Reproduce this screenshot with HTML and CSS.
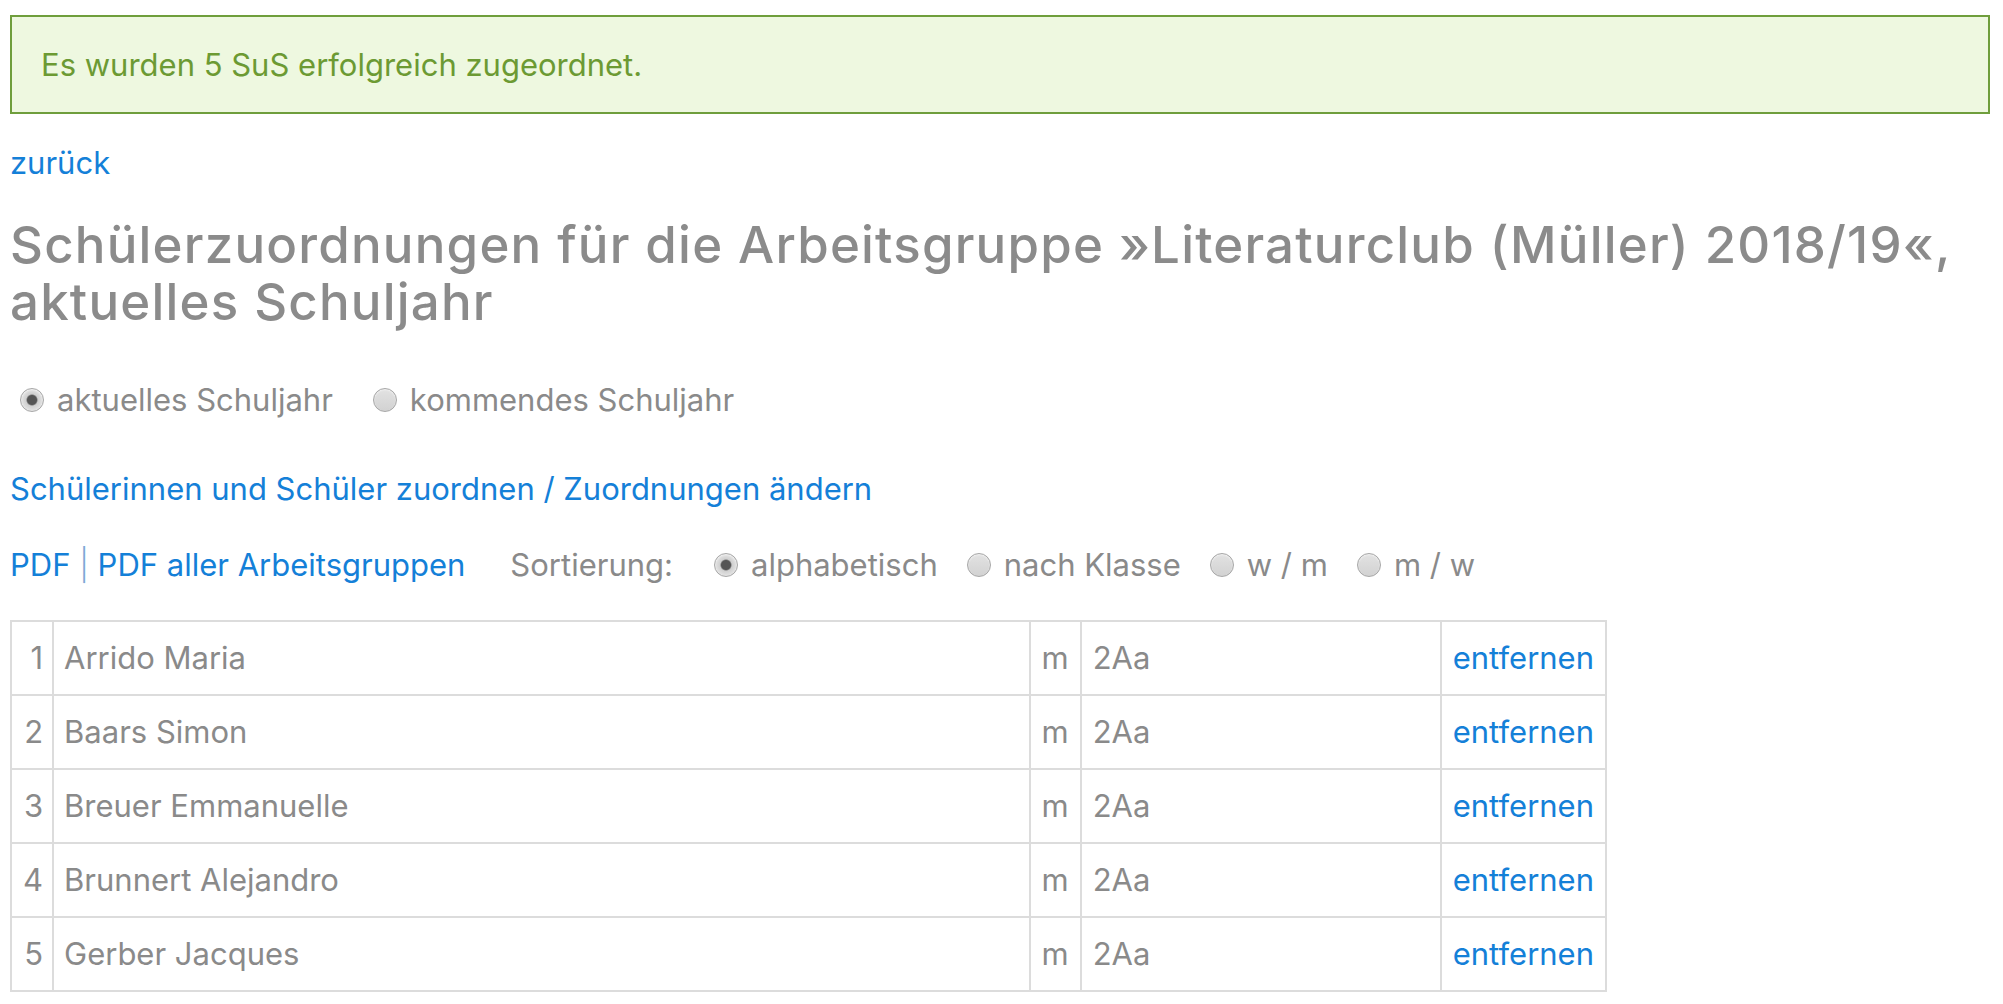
FILE: index.html
```html
<!DOCTYPE html>
<html lang="de">
<head>
  <meta charset="UTF-8"/>
  <meta name="viewport" content="width=device-width,initial-scale=1"/>
  <title>Schülerzuordnungen</title>
  <link rel="stylesheet" href="styles.css">
</head>
<body>

  <div class="notice">Es wurden 5 SuS erfolgreich zugeordnet.</div>

  <p class="back"><a href="#">zurück</a></p>

  <h1>Schülerzuordnungen für die Arbeitsgruppe »Literaturclub (Müller) 2018/19«, aktuelles Schuljahr</h1>

  <!-- Schuljahr -->
  <form class="choices year">
    <label><input type="radio" name="year" checked> aktuelles Schuljahr</label>
    <label><input type="radio" name="year"> kommendes Schuljahr</label>
  </form>

  <p class="assign"><a href="#">Schülerinnen und Schüler zuordnen / Zuordnungen ändern</a></p>

  <!-- PDF + Sortierung -->
  <form class="choices sort">
    <span class="pdf"><a href="#">PDF</a> <span class="sep">|</span> <a href="#">PDF aller Arbeitsgruppen</a></span>
    <span class="sort-label">Sortierung:</span>
    <label><input type="radio" name="sort" checked> alphabetisch</label>
    <label><input type="radio" name="sort"> nach Klasse</label>
    <label><input type="radio" name="sort"> w / m</label>
    <label><input type="radio" name="sort"> m / w</label>
  </form>

  <table class="members">
    <tr><td class="num">1</td><td class="name">Arrido Maria</td><td class="sex">m</td><td class="class">2Aa</td><td class="action"><a href="#">entfernen</a></td></tr>
    <tr><td class="num">2</td><td class="name">Baars Simon</td><td class="sex">m</td><td class="class">2Aa</td><td class="action"><a href="#">entfernen</a></td></tr>
    <tr><td class="num">3</td><td class="name">Breuer Emmanuelle</td><td class="sex">m</td><td class="class">2Aa</td><td class="action"><a href="#">entfernen</a></td></tr>
    <tr><td class="num">4</td><td class="name">Brunnert Alejandro</td><td class="sex">m</td><td class="class">2Aa</td><td class="action"><a href="#">entfernen</a></td></tr>
    <tr><td class="num">5</td><td class="name">Gerber Jacques</td><td class="sex">m</td><td class="class">2Aa</td><td class="action"><a href="#">entfernen</a></td></tr>
  </table>

</body>
</html>
```

FILE: styles.css
```css
body {
  margin: 15px 13px 20px 10px;
  background: #fff; color: #8a8a8a;
  font-family: Inter, "Noto Sans", sans-serif;
  font-size: 31px; line-height: 40px;
}
a { color: #1480d8; text-decoration: none; }
p { margin: 0; }

.notice {
  display: flex; align-items: center;
  height: 95px; padding: 0 23px 0 29px;
  border: 2px solid #6f9e3c; background: #eef8e0; color: #6c9a33;
}

.back { margin-top: 29px; }

h1 {
  margin: 33px 0 0; font-size: 51px; line-height: 57px;
  font-weight: 500; color: #8b8b8b; letter-spacing: 1.2px;
}

.choices { display: flex; align-items: center; margin: 0; }
.choices label { display: flex; align-items: center; }
.year { margin-top: 50px; padding-left: 10px; gap: 40px; }
.assign { margin-top: 49px; }
.sort { margin-top: 36px; gap: 29px; }
.sort .pdf { margin-right: 16px; }
.sort .sep { color: #7fa9d6; font-weight: 300; }
.sort .sort-label { margin-right: 12px; }

input[type=radio] {
  -webkit-appearance: none; appearance: none;
  width: 24px; height: 24px; margin: 0 13px 0 0;
  border: 1px solid #a7a7a7; border-radius: 50%;
  background: linear-gradient(#e2e2e2, #d2d2d2);
  box-shadow: inset 0 1px 2px rgba(255,255,255,.6);
}
input[type=radio]:checked {
  background: radial-gradient(circle, #555 0 4.5px, #777 5px, #cfcfcf 6px, #e4e4e4 11px);
}

.members {
  margin-top: 35px; width: 1597px;
  border-collapse: collapse; border: 2px solid #dcdcdc;
}
.members td {
  height: 72px; padding: 0 11px;
  border: 2px solid #dcdcdc; vertical-align: middle;
}
.members .num { width: 20px; padding: 0 9px 0 11px; text-align: right; }
.members .name { padding-left: 10px; }
.members .sex { width: 26px; }
.members .class { width: 336px; }
.members .action { width: 137px; }
```
